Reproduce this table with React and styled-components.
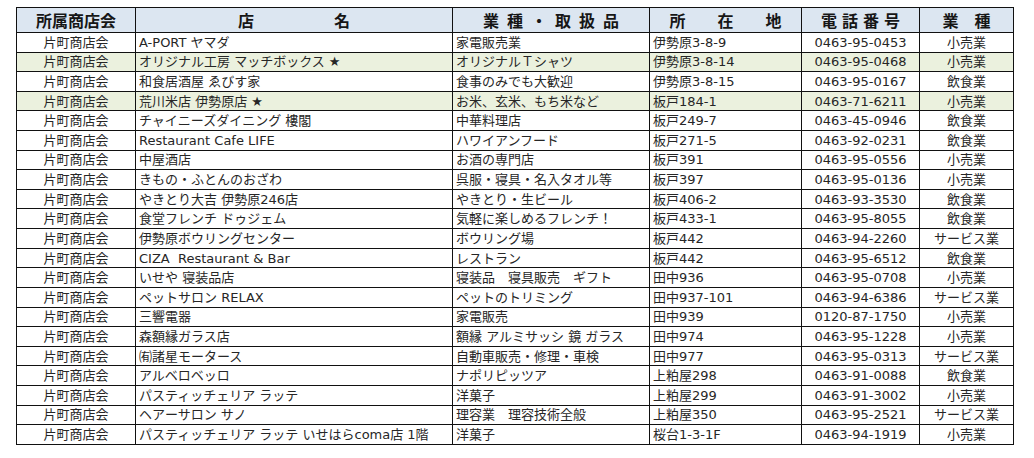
import React from 'react';
import styled, { createGlobalStyle } from 'styled-components';

const GlobalStyle = createGlobalStyle`
  html, body {
    margin: 0;
    padding: 0;
    background: #ffffff;
  }
  body {
    font-family: "DejaVu Sans", "Noto Sans CJK JP", sans-serif;
    color: #222;
  }
`;

const Page = styled.div`
  padding: 7px 0 0 16px;
`;

const Table = styled.table`
  border-collapse: collapse;
  table-layout: fixed;
  width: 998px;
  border: 1px solid #111;
`;

const HeadRow = styled.tr`
  height: 25px;
  background: #dce6f1;
`;

const HeadCell = styled.th`
  border: 1px solid #111;
  padding: 0;
  font-family: "Noto Sans CJK JP", sans-serif;
  font-weight: 700;
  font-size: 16px;
  line-height: 1;
  color: #161616;
  text-align: center;
  letter-spacing: ${({ $spacing }) => $spacing || '0px'};
  text-indent: ${({ $spacing }) => $spacing || '0px'};
  white-space: pre;
`;

const Row = styled.tr`
  height: 19.62px;
  background: ${({ $green }) => ($green ? '#ebf1de' : '#ffffff')};
`;

const Cell = styled.td`
  border: 1px solid #111;
  padding: 0 0 0 ${({ $align }) => ($align === 'center' ? '0' : '3px')};
  font-size: 13px;
  line-height: 1;
  color: #262626;
  text-align: ${({ $align }) => $align || 'left'};
  white-space: pre;
  overflow: hidden;
  vertical-align: middle;
`;

const columns = [
  { width: 119 },
  { width: 317 },
  { width: 197 },
  { width: 152 },
  { width: 118 },
  { width: 94 },
];

const shops = [
  ['A-PORT ヤマダ', '家電販売業', '伊勢原3-8-9', '0463-95-0453', '小売業'],
  ['オリジナル工房 マッチボックス ★', 'オリジナルＴシャツ', '伊勢原3-8-14', '0463-95-0468', '小売業', true],
  ['和食居酒屋 ゑびす家', '食事のみでも大歓迎', '伊勢原3-8-15', '0463-95-0167', '飲食業'],
  ['荒川米店 伊勢原店 ★', 'お米、玄米、もち米など', '板戸184-1', '0463-71-6211', '小売業', true],
  ['チャイニーズダイニング 樓閣', '中華料理店', '板戸249-7', '0463-45-0946', '飲食業'],
  ['Restaurant Cafe LIFE', 'ハワイアンフード', '板戸271-5', '0463-92-0231', '飲食業'],
  ['中屋酒店', 'お酒の専門店', '板戸391', '0463-95-0556', '小売業'],
  ['きもの・ふとんのおざわ', '呉服・寝具・名入タオル等', '板戸397', '0463-95-0136', '小売業'],
  ['やきとり大吉 伊勢原246店', 'やきとり・生ビール', '板戸406-2', '0463-93-3530', '飲食業'],
  ['食堂フレンチ ドゥジェム', '気軽に楽しめるフレンチ！', '板戸433-1', '0463-95-8055', '飲食業'],
  ['伊勢原ボウリングセンター', 'ボウリング場', '板戸442', '0463-94-2260', 'サービス業'],
  ['CIZA  Restaurant & Bar', 'レストラン', '板戸442', '0463-95-6512', '飲食業'],
  ['いせや 寝装品店', '寝装品　寝具販売　ギフト', '田中936', '0463-95-0708', '小売業'],
  ['ペットサロン RELAX', 'ペットのトリミング', '田中937-101', '0463-94-6386', 'サービス業'],
  ['三響電器', '家電販売', '田中939', '0120-87-1750', '小売業'],
  ['森額縁ガラス店', '額縁 アルミサッシ 鏡 ガラス', '田中974', '0463-95-1228', '小売業'],
  ['㈲諸星モータース', '自動車販売・修理・車検', '田中977', '0463-95-0313', 'サービス業'],
  ['アルベロベッロ', 'ナポリピッツア', '上粕屋298', '0463-91-0088', '飲食業'],
  ['パスティッチェリア ラッテ', '洋菓子', '上粕屋299', '0463-91-3002', '小売業'],
  ['ヘアーサロン サノ', '理容業　理容技術全般', '上粕屋350', '0463-95-2521', 'サービス業'],
  ['パスティッチェリア ラッテ いせはらcoma店 1階', '洋菓子', '桜台1-3-1F', '0463-94-1919', '小売業'],
];

const App = () => {
  return (
    <Page>
      <GlobalStyle />
      <Table>
        <colgroup>
          {columns.map((c, i) => (
            <col key={i} style={{ width: c.width }} />
          ))}
        </colgroup>
        <thead>
          <HeadRow>
            <HeadCell>所属商店会</HeadCell>
            <HeadCell>{'店\u3000\u3000\u3000\u3000\u3000名'}</HeadCell>
            <HeadCell $spacing="8px">業種・取扱品</HeadCell>
            <HeadCell>{'所\u3000\u3000在\u3000\u3000地'}</HeadCell>
            <HeadCell $spacing="5px">電話番号</HeadCell>
            <HeadCell>{'業\u3000種'}</HeadCell>
          </HeadRow>
        </thead>
        <tbody>
          {shops.map(([name, kind, address, phone, type, green], i) => (
            <Row key={i} $green={green}>
              <Cell $align="center">片町商店会</Cell>
              <Cell>{name}</Cell>
              <Cell>{kind}</Cell>
              <Cell>{address}</Cell>
              <Cell $align="center">{phone}</Cell>
              <Cell $align="center">{type}</Cell>
            </Row>
          ))}
        </tbody>
      </Table>
    </Page>
  );
};

export default App;
